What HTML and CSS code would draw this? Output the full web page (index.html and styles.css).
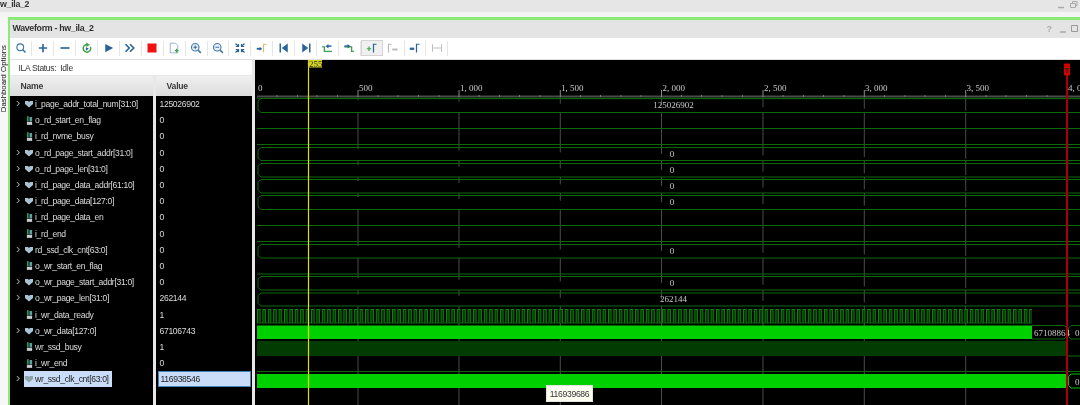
FILE: index.html
```html
<!DOCTYPE html>
<html lang="en">
<head>
<meta charset="utf-8">
<title>Waveform - hw_ila_2</title>
<link rel="stylesheet" href="styles.css">
</head>
<body>
<div class="app">
  <header class="topbar">
    <span class="top-title">w_ila_2</span>
    <span class="win-ctl">
      <svg width="22" height="10" viewBox="0 0 22 10"><path d="M1 7.5H7" stroke="#aaa" stroke-width="1.5"/><path d="M13.500 3.500h5v4h-5zM15.500 3.500v-2h4.500v4h-2" fill="none" stroke="#aaa"/></svg>
    </span>
  </header>
  <div class="main">
    <aside class="rail"><span class="rail-text">Dashboard Options</span></aside>
    <section class="panel">
      <div class="titlebar">
        <span class="panel-title">Waveform - hw_ila_2</span>
        <span class="panel-ctl">
          <span class="help">?</span>
          <svg width="28" height="10" viewBox="0 0 28 10"><path d="M6 8H12" stroke="#aaa" stroke-width="1.500"/><path d="M17.500 1.500h6v6h-6z" fill="none" stroke="#999"/></svg>
        </span>
      </div>
      <div class="toolbar">
        <span class="tool"><svg class="ico" viewBox="0 0 16 16"><circle cx="7" cy="7" r="4.500" fill="none" stroke="#3c78a8" stroke-width="1.500"/><path d="M10.500 10.500l3.500 3.500" stroke="#3c78a8" stroke-width="2"/></svg></span>
        <span class="tool"><svg class="ico" viewBox="0 0 16 16"><path d="M8 2.500v11M2.500 8h11" stroke="#27649c" stroke-width="2.200"/></svg></span>
        <span class="tool"><svg class="ico" viewBox="0 0 16 16"><path d="M2 8h12" stroke="#27649c" stroke-width="2.200"/></svg></span>
        <span class="tool"><svg class="ico" viewBox="0 0 16 16"><path d="M8 3.500a5 5 0 1 0 4.500 3" fill="none" stroke="#3fa14a" stroke-width="2"/><path d="M7 .5l5 3-5 3z" fill="#3fa14a"/><path d="M6.500 6.500l4 2.500-4 2.500z" fill="#27649c"/></svg></span>
        <span class="tool"><svg class="ico" viewBox="0 0 16 16"><path d="M3 2.500l10.500 5.500-10.500 5.500z" fill="#27649c"/></svg></span>
        <span class="tool"><svg class="ico" viewBox="0 0 16 16"><path d="M2 3l5 5-5 5M8 3l5 5-5 5" fill="none" stroke="#27649c" stroke-width="2.200"/></svg></span>
        <span class="tool"><svg class="ico" viewBox="0 0 16 16"><rect x="2" y="2" width="12" height="12" fill="#f01010"/></svg></span>
        <span class="tool"><svg class="ico" viewBox="0 0 16 16"><path d="M3 1.500h7l3 3v10h-10z" fill="#fff" stroke="#7c9db8"/><path d="M9 11.500h5M11.500 9v5" stroke="#3fa14a" stroke-width="1.800"/></svg></span>
        <span class="tool"><svg class="ico" viewBox="0 0 16 16"><circle cx="7" cy="7" r="5" fill="#e8f0f6" stroke="#3c78a8" stroke-width="1.500"/><path d="M4.500 7h5M7 4.500v5" stroke="#27649c" stroke-width="1.200"/><path d="M10.800 10.800l3.700 3.700" stroke="#3c78a8" stroke-width="2"/></svg></span>
        <span class="tool"><svg class="ico" viewBox="0 0 16 16"><circle cx="7" cy="7" r="5" fill="#e8f0f6" stroke="#3c78a8" stroke-width="1.500"/><path d="M4.500 7h5" stroke="#27649c" stroke-width="1.200"/><path d="M10.800 10.800l3.700 3.700" stroke="#3c78a8" stroke-width="2"/></svg></span>
        <span class="tool"><svg class="ico" viewBox="0 0 16 16"><path d="M2 2l4 4M6 2.500v3.500h-3.500M14 2l-4 4M10 2.500v3.500h3.500M2 14l4-4M6 13.500v-3.500h-3.500M14 14l-4-4M10 13.500v-3.500h3.500" fill="none" stroke="#27649c" stroke-width="1.600"/></svg></span>
        <span class="tool"><svg class="ico" viewBox="0 0 16 16"><path d="M1 9h6" stroke="#27649c" stroke-width="2.500"/><path d="M5 6.500l3 2.500-3 2.500z" fill="#27649c"/><path d="M10 14V3h4" fill="none" stroke="#cfc070" stroke-width="1.600"/></svg></span>
        <span class="tool"><svg class="ico" viewBox="0 0 16 16"><path d="M3 2v12" stroke="#27649c" stroke-width="2"/><path d="M13 2v12l-8-6z" fill="#27649c"/></svg></span>
        <span class="tool"><svg class="ico" viewBox="0 0 16 16"><path d="M13 2v12" stroke="#27649c" stroke-width="2"/><path d="M3 2v12l8-6z" fill="#27649c"/></svg></span>
        <span class="tool"><svg class="ico" viewBox="0 0 16 16"><path d="M1.500 6.500h3v6h10" fill="none" stroke="#3fa14a" stroke-width="1.800"/><path d="M8 5.500h6" stroke="#27649c" stroke-width="2"/><path d="M10 2.500l-4 3 4 3z" fill="#27649c"/></svg></span>
        <span class="tool"><svg class="ico" viewBox="0 0 16 16"><path d="M1.500 6.500h10v6h3" fill="none" stroke="#3fa14a" stroke-width="1.800"/><path d="M2 5.500h6" stroke="#27649c" stroke-width="2"/><path d="M6 2.500l4 3-4 3z" fill="#27649c"/></svg></span>
        <span class="tool active"><svg class="ico" viewBox="0 0 16 16"><path d="M1 9h6M4 6v6" stroke="#3fa14a" stroke-width="1.600"/><path d="M10 14V3h4" fill="none" stroke="#27649c" stroke-width="1.600"/></svg></span>
        <span class="tool"><svg class="ico" viewBox="0 0 16 16"><path d="M2 14V3h4" fill="none" stroke="#b8b8b8" stroke-width="1.500"/><path d="M7 10h7" stroke="#b8b8b8" stroke-width="2.500"/></svg></span>
        <span class="tool"><svg class="ico" viewBox="0 0 16 16"><path d="M1 9h6" stroke="#27649c" stroke-width="3"/><path d="M10 14V3h4" fill="none" stroke="#27649c" stroke-width="1.600"/></svg></span>
        <span class="tool"><svg class="ico" viewBox="0 0 16 16"><path d="M2 3v10M14 3v10M3 8h10" fill="none" stroke="#bbb" stroke-width="1.300"/></svg></span>
      </div>
      <div class="workspace">
        <div class="signals">
          <div class="status"><span class="status-label">ILA Status:</span><span>Idle</span></div>
          <div class="columns">
            <div class="col names">
              <div class="col-head">Name</div>
              <div class="rows">
                <div class="row"><span class="chev">&#8250;</span><svg class="bus" viewBox="0 0 8 8"><path d="M0 1h3l1 1 1-1h3v3l-4 3.500-4-3.500z"/></svg><span>i_page_addr_total_num[31:0]</span></div>
                <div class="row"><span class="chev"></span><svg class="bit" viewBox="0 0 8 10"><path d="M1 0h2v6h-2z" fill="#2f9a4a"/><rect x="1" y="6.500" width="6" height="3.500" fill="#c8ccd0"/><rect x="4" y="1" width="3" height="5" fill="#5aa0a0"/></svg><span>o_rd_start_en_flag</span></div>
                <div class="row"><span class="chev"></span><svg class="bit" viewBox="0 0 8 10"><path d="M1 0h2v6h-2z" fill="#2f9a4a"/><rect x="1" y="6.500" width="6" height="3.500" fill="#c8ccd0"/><rect x="4" y="1" width="3" height="5" fill="#5aa0a0"/></svg><span>i_rd_nvme_busy</span></div>
                <div class="row"><span class="chev">&#8250;</span><svg class="bus" viewBox="0 0 8 8"><path d="M0 1h3l1 1 1-1h3v3l-4 3.500-4-3.500z"/></svg><span>o_rd_page_start_addr[31:0]</span></div>
                <div class="row"><span class="chev">&#8250;</span><svg class="bus" viewBox="0 0 8 8"><path d="M0 1h3l1 1 1-1h3v3l-4 3.500-4-3.500z"/></svg><span>o_rd_page_len[31:0]</span></div>
                <div class="row"><span class="chev">&#8250;</span><svg class="bus" viewBox="0 0 8 8"><path d="M0 1h3l1 1 1-1h3v3l-4 3.500-4-3.500z"/></svg><span>i_rd_page_data_addr[61:10]</span></div>
                <div class="row"><span class="chev">&#8250;</span><svg class="bus" viewBox="0 0 8 8"><path d="M0 1h3l1 1 1-1h3v3l-4 3.500-4-3.500z"/></svg><span>i_rd_page_data[127:0]</span></div>
                <div class="row"><span class="chev"></span><svg class="bit" viewBox="0 0 8 10"><path d="M1 0h2v6h-2z" fill="#2f9a4a"/><rect x="1" y="6.500" width="6" height="3.500" fill="#c8ccd0"/><rect x="4" y="1" width="3" height="5" fill="#5aa0a0"/></svg><span>i_rd_page_data_en</span></div>
                <div class="row"><span class="chev"></span><svg class="bit" viewBox="0 0 8 10"><path d="M1 0h2v6h-2z" fill="#2f9a4a"/><rect x="1" y="6.500" width="6" height="3.500" fill="#c8ccd0"/><rect x="4" y="1" width="3" height="5" fill="#5aa0a0"/></svg><span>i_rd_end</span></div>
                <div class="row"><span class="chev">&#8250;</span><svg class="bus" viewBox="0 0 8 8"><path d="M0 1h3l1 1 1-1h3v3l-4 3.500-4-3.500z"/></svg><span>rd_ssd_clk_cnt[63:0]</span></div>
                <div class="row"><span class="chev"></span><svg class="bit" viewBox="0 0 8 10"><path d="M1 0h2v6h-2z" fill="#2f9a4a"/><rect x="1" y="6.500" width="6" height="3.500" fill="#c8ccd0"/><rect x="4" y="1" width="3" height="5" fill="#5aa0a0"/></svg><span>o_wr_start_en_flag</span></div>
                <div class="row"><span class="chev">&#8250;</span><svg class="bus" viewBox="0 0 8 8"><path d="M0 1h3l1 1 1-1h3v3l-4 3.500-4-3.500z"/></svg><span>o_wr_page_start_addr[31:0]</span></div>
                <div class="row"><span class="chev">&#8250;</span><svg class="bus" viewBox="0 0 8 8"><path d="M0 1h3l1 1 1-1h3v3l-4 3.500-4-3.500z"/></svg><span>o_wr_page_len[31:0]</span></div>
                <div class="row"><span class="chev"></span><svg class="bit" viewBox="0 0 8 10"><path d="M1 0h2v6h-2z" fill="#2f9a4a"/><rect x="1" y="6.500" width="6" height="3.500" fill="#c8ccd0"/><rect x="4" y="1" width="3" height="5" fill="#5aa0a0"/></svg><span>i_wr_data_ready</span></div>
                <div class="row"><span class="chev">&#8250;</span><svg class="bus" viewBox="0 0 8 8"><path d="M0 1h3l1 1 1-1h3v3l-4 3.500-4-3.500z"/></svg><span>o_wr_data[127:0]</span></div>
                <div class="row"><span class="chev"></span><svg class="bit" viewBox="0 0 8 10"><path d="M1 0h2v6h-2z" fill="#2f9a4a"/><rect x="1" y="6.500" width="6" height="3.500" fill="#c8ccd0"/><rect x="4" y="1" width="3" height="5" fill="#5aa0a0"/></svg><span>wr_ssd_busy</span></div>
                <div class="row"><span class="chev"></span><svg class="bit" viewBox="0 0 8 10"><path d="M1 0h2v6h-2z" fill="#2f9a4a"/><rect x="1" y="6.500" width="6" height="3.500" fill="#c8ccd0"/><rect x="4" y="1" width="3" height="5" fill="#5aa0a0"/></svg><span>i_wr_end</span></div>
                <div class="row"><span class="chev">&#8250;</span><span class="sel-name"><svg class="bus faded" viewBox="0 0 8 8"><path d="M0 1h3l1 1 1-1h3v3l-4 3.500-4-3.500z"/></svg><span>wr_ssd_clk_cnt[63:0]</span></span></div>
              </div>
            </div>
            <div class="col values">
              <div class="col-head">Value</div>
              <div class="rows">
                <div class="row">125026902</div><div class="row">0</div><div class="row">0</div>
                <div class="row">0</div><div class="row">0</div><div class="row">0</div>
                <div class="row">0</div><div class="row">0</div><div class="row">0</div>
                <div class="row">0</div><div class="row">0</div><div class="row">0</div>
                <div class="row">262144</div><div class="row">1</div><div class="row">67106743</div>
                <div class="row">1</div><div class="row">0</div><div class="row"><span class="sel-value">116938546</span></div>
              </div>
            </div>
          </div>
        </div>
        <div class="wave">
          <svg class="wave-svg" viewBox="255 60 825 345" width="825" height="345">
            <defs>
              <pattern id="pulse" x="257" y="309" width="5.4" height="14.500" patternUnits="userSpaceOnUse">
                <path d="M.5 14.500V.5H3V14H5.400" fill="#012a01" stroke="#0b8a0b"/>
              </pattern>
            </defs>
            <g class="grid">
              <path d="M358 97V405M459 97V405M560.300 97V405M661.500 97V405M763 97V405M864.300 97V405M965.700 97V405"/>
            </g>
            <path class="ruler" d="M257 96.500H1080"/>
            <path class="major" d="M358 90V97M459 90V97M560.300 90V97M661.500 90V97M763 90V97M864.300 90V97M965.700 90V97"/>
            <path class="minor" d="M277 95V97M297.500 95V97M317 95V97M337.500 95V97M378 95V97M398 95V97M418.500 95V97M439 95V97M479 95V97M499.500 95V97M519.500 95V97M540 95V97M580.500 95V97M600.500 95V97M621 95V97M641 95V97M681.500 95V97M701.500 95V97M722 95V97M742.500 95V97M783 95V97M803.500 95V97M823.500 95V97M844 95V97M884.500 95V97M905 95V97M925 95V97M945.500 95V97M986 95V97M1006 95V97M1026.500 95V97M1047 95V97"/>
            <g class="labels">
              <text x="258" y="91">0</text><text x="359" y="91">500</text><text x="460" y="91">1, 000</text><text x="561" y="91">1, 500</text><text x="662.500" y="91">2, 000</text><text x="764" y="91">2, 500</text><text x="865" y="91">3, 000</text><text x="966.500" y="91">3, 500</text><text x="1068" y="91">4, 0</text>
            </g>
            <path class="trace ground" d="M257 98.500H1080"/>
            <g class="hex">
              <path d="M261 98.500L258 101V110L261 112.500H1080M261 98.500H1080"/>
              <path d="M261 147.500L258 150V158L261 160.500H1080M261 147.500H1080"/>
              <path d="M261 163.500L258 166V174.500L261 177H1080M261 163.500H1080"/>
              <path d="M261 179.500L258 182V190.500L261 193H1080M261 179.500H1080"/>
              <path d="M261 195.500L258 198V207L261 209.500H1080M261 195.500H1080"/>
              <path d="M261 244.500L258 247V255.500L261 258H1080M261 244.500H1080"/>
              <path d="M261 276.500L258 279V287.500L261 290H1080M261 276.500H1080"/>
              <path d="M261 293L258 295.500V303.500L261 306H1080M261 293H1080"/>
            </g>
            <path class="trace" d="M257 128.500H1080M257 144.500H1080M257 225.500H1080M257 241.500H1080M257 274H1080M1067 356H1080M257 371.500H1080"/>
            <rect x="257" y="309" width="775" height="14.500" fill="url(#pulse)"/>
            <rect class="solid" x="257" y="325.500" width="775" height="13.500"/>
            <path class="hex" d="M1032 325.500H1064L1067 328V336.500L1064 339H1032"/>
            <path class="hex" d="M1071 325.500L1068.500 328V336.500L1071 339H1080M1071 325.500H1080"/>
            <rect class="dark" x="257" y="341" width="810" height="15"/>
            <rect class="solid" x="257" y="374" width="810" height="14"/>
            <path class="hex bright" d="M1071 374L1068.500 376.500V385.500L1071 388H1080M1071 374H1080"/>
            <g class="values-text">
              <text x="673.500" y="108" text-anchor="middle">125026902</text>
              <text x="672" y="157" text-anchor="middle">0</text>
              <text x="672" y="173" text-anchor="middle">0</text>
              <text x="672" y="189" text-anchor="middle">0</text>
              <text x="672" y="205" text-anchor="middle">0</text>
              <text x="672" y="254" text-anchor="middle">0</text>
              <text x="672" y="286" text-anchor="middle">0</text>
              <text x="673.500" y="302" text-anchor="middle">262144</text>
              <text x="1034" y="335.500">67108864</text>
              <text x="1075" y="335.500">0</text>
              <text x="1075" y="384.500">0</text>
            </g>
            <path class="cursor" d="M308.500 60V405"/>
            <rect class="cursor-tag" x="308" y="60" width="14" height="7.500"/>
            <text class="cursor-num" x="309" y="67">255</text>
            <path class="trigger" d="M1067 66V405"/>
            <rect class="trigger-tag" x="1064" y="63.500" width="6" height="12" rx=".5"/>
            <text class="trigger-t" x="1067" y="72.500" text-anchor="middle">T</text>
          </svg>
          <div class="tooltip">116939686</div>
        </div>
      </div>
    </section>
  </div>
</div>
</body>
</html>
```
FILE: styles.css
```css
* { box-sizing: border-box; }
html, body { margin: 0; padding: 0; background: #e6e6e6; }
body { width: 1080px; height: 405px; overflow: hidden; font-family: "Liberation Sans", Arial, sans-serif; }
.app { width: 1080px; height: 405px; display: flex; flex-direction: column; filter: blur(.4px); }
.topbar { height: 12px; flex: none; background: #e6e6e6; display: flex; justify-content: space-between; align-items: flex-start; overflow: hidden; }
.top-title { font-size: 8.8px; letter-spacing: -.3px; font-weight: 700; color: #333; line-height: 9px; }
.win-ctl { display: flex; margin-right: 1px; }
.main { flex: 1; display: flex; min-height: 0; background: #f4f4f4; padding-top: 5px; }
.rail { width: 8px; flex: none; background: #f7f7f7; position: relative; overflow: hidden; }
.rail-text { position: absolute; left: 0; top: 28px; line-height: 7px; writing-mode: vertical-rl; transform: rotate(180deg); font-size: 7.8px; color: #111; white-space: nowrap; }
.panel { flex: 1; min-width: 0; display: flex; flex-direction: column; border-top: 3px solid #8aec76; border-left: 2.5px solid #8aec76; background: #eee; overflow: hidden; }
.titlebar { height: 18px; flex: none; background: #e4e4e4; display: flex; justify-content: space-between; align-items: center; padding-left: 2.5px; }
.panel-title { font-size: 8.800px; letter-spacing: -.3px; font-weight: 700; color: #303030; margin-top: -3px; }
.panel-ctl { display: flex; align-items: center; margin-right: -2px; }
.help { font-size: 9px; font-weight: 700; color: #aaa; margin-right: 2px; }
.toolbar { height: 22px; flex: none; background: #fff; display: flex; align-items: center; padding: 0 0 1px .5px; border-bottom: 1px solid #e0e0e0; }
.tool { width: 21.9px; height: 15px; flex: none; display: flex; align-items: center; justify-content: center; border-right: 1px solid #e6e6e6; }
.tool.active { height: 16px; background: #f0f0f0; border: 1px solid #d4d4d4; }
.ico { width: 12px; height: 12px; display: block; }
.workspace { flex: 1; min-height: 0; display: flex; }
.signals { width: 244.5px; flex: none; display: flex; flex-direction: column; background: #e8e8e8; }
.status { height: 15px; flex: none; margin-right: 3px; margin-bottom: 1px; padding-left: 8.5px; background: #fff; display: flex; align-items: center; gap: 4px; font-size: 8.500px; letter-spacing: -.3px; color: #333; }
.columns { flex: 1; min-height: 0; display: flex; }
.col { display: flex; flex-direction: column; }
.names { width: 143px; margin-right: 3px; }
.values { width: 95.500px; }
.col-head { height: 20px; flex: none; background: linear-gradient(#f0f0f0, #dcdcdc); font-size: 8.600px; letter-spacing: -.2px; font-weight: 700; color: #3a3a3a; display: flex; align-items: center; padding-left: 10.5px; }
.rows { flex: 1; background: #000; color: #dcdcdc; font-size: 8.600px; letter-spacing: -.33px; }
.row { height: 16.2px; display: flex; align-items: center; white-space: nowrap; }
.names .row { padding-left: 6px; }
.values .row { padding-left: 3.500px; }
.chev { width: 8px; flex: none; color: #999; font-size: 13px; line-height: 10px; margin-top: -2px; }
.bus { width: 8px; height: 8px; flex: none; margin: 0 2px 0 1px; fill: #a8c4d4; }
.bus.faded { fill: #8ca4a8; margin: 0 2px 0 1px; }
.bit { width: 7px; height: 9px; flex: none; margin: 0 2px 0 2px; }
.sel-name { height: 16px; width: 88px; background: #c9ddf8; color: #222; display: flex; align-items: center; }
.sel-value { height: 16px; width: 93px; margin-left: -2px; padding-left: 2px; background: #c9ddf8; color: #222; border: 1px solid #3f84b8; display: flex; align-items: center; }
.wave { flex: 1; min-width: 0; background: #000; position: relative; overflow: hidden; }
.wave-svg { display: block; }
.grid path { stroke: #4a4a4a; stroke-width: 1; fill: none; }
.ruler { stroke: #4a4a4a; stroke-width: 2; fill: none; }
.major { stroke: #888; stroke-width: 1; fill: none; }
.minor { stroke: #777; stroke-width: 1; fill: none; }
.labels text, .values-text text { font-family: "Liberation Serif", serif; font-size: 9px; fill: #c8c8c8; }
.trace { stroke: #0a6a0a; stroke-width: 1; fill: none; }
.trace.ground { stroke: #0a4a0a; stroke-width: 1.500; }
.hex path, path.hex { stroke: #0a6a0a; stroke-width: 1; fill: #000; }
path.hex.bright { stroke: #00c000; }
.solid { fill: #00d000; }
.dark { fill: #033c03; }
.cursor { stroke: #e0e000; stroke-width: 1.200; fill: none; }
.cursor-tag { fill: #d4d420; }
.cursor-num { font-family: "Liberation Serif", serif; font-size: 9px; fill: #333; }
.trigger { stroke: #a80000; stroke-width: 2; fill: none; }
.trigger-tag { fill: #d00000; }
.trigger-t { font-family: "Liberation Sans", sans-serif; font-size: 7px; font-weight: 700; fill: #222; }
.tooltip { position: absolute; left: 291.5px; top: 325px; width: 47px; height: 17px; background: #fffff2; color: #333; font-size: 8.600px; letter-spacing: -.3px; display: flex; align-items: center; justify-content: center; border: 1px solid #e4e4dc; }
```
